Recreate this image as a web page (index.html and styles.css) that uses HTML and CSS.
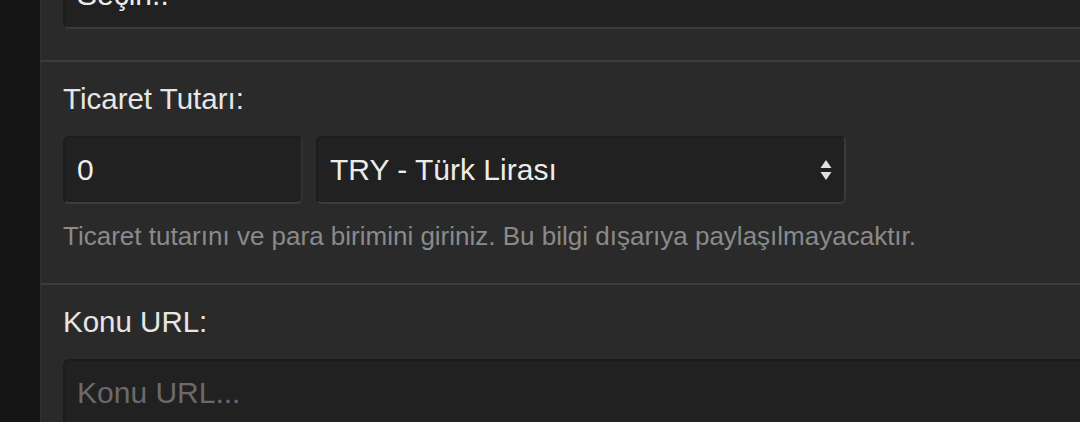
FILE: index.html
```html
<!DOCTYPE html>
<html lang="tr">
<head>
<meta charset="utf-8">
<link rel="stylesheet" href="styles.css">
</head>
<body>
<div class="page">
  <aside class="sidebar"></aside>
  <main class="panel">
    <section class="group group-first">
      <div class="control select-like">Seçin..</div>
    </section>
    <section class="group">
      <label class="label">Ticaret Tutarı:</label>
      <div class="row">
        <div class="control amount">0</div>
        <div class="control currency">
          <span>TRY - Türk Lirası</span>
          <svg class="arrows" width="12" height="22" viewBox="0 0 12 22"><path d="M6 1 L11.5 9 H0.5 Z M6 21 L11.5 13 H0.5 Z" fill="#e0e0e0"/></svg>
        </div>
      </div>
      <p class="help">Ticaret tutarını ve para birimini giriniz. Bu bilgi dışarıya paylaşılmayacaktır.</p>
    </section>
    <section class="group">
      <label class="label">Konu URL:</label>
      <div class="control wide placeholder">Konu URL...</div>
    </section>
  </main>
</div>
</body>
</html>
```
FILE: styles.css
```css
* { box-sizing: border-box; }
html, body { margin: 0; padding: 0; background: #2a2a2a; overflow: hidden; }
body { font-family: "Liberation Sans", Arial, sans-serif; color: #e8e8e8; }
.page { display: flex; height: 422px; }
.sidebar { width: 41px; flex: none; background: #141414; border-right: 1px solid #333; }
.panel { flex: 1; min-width: 0; display: flex; flex-direction: column; }
.group { padding: 20px 0 0 22px; border-bottom: 2px solid #3c3c3c; }
.group-first { margin-top: -39px; padding-top: 0; padding-bottom: 31px; }
.label { display: block; font-size: 29.5px; line-height: 34px; color: #e6e6e6; margin-bottom: 20px; }
.row { display: flex; gap: 13px; }
.control {
  height: 68px; background: #212121; border: 2px solid #1c1c1c; border-bottom-color: #3c3c3c; border-right-color: #333;
  border-radius: 6px; font-size: 30px; color: #ececec; padding: 0 12px; display: flex; align-items: center;
}
.select-like { width: 1100px; }
.amount { width: 240px; }
.currency { width: 530px; justify-content: space-between; border-color: #1c1c1c #3a3a3a #3c3c3c #1c1c1c; }
.arrows { margin-right: 0; }
.help { margin: 17px 0 0; font-size: 26px; line-height: 30px; color: #8a8a8a; padding-bottom: 32px; }
.wide { width: 1100px; }
.placeholder { color: #6a6a6a; }
```
